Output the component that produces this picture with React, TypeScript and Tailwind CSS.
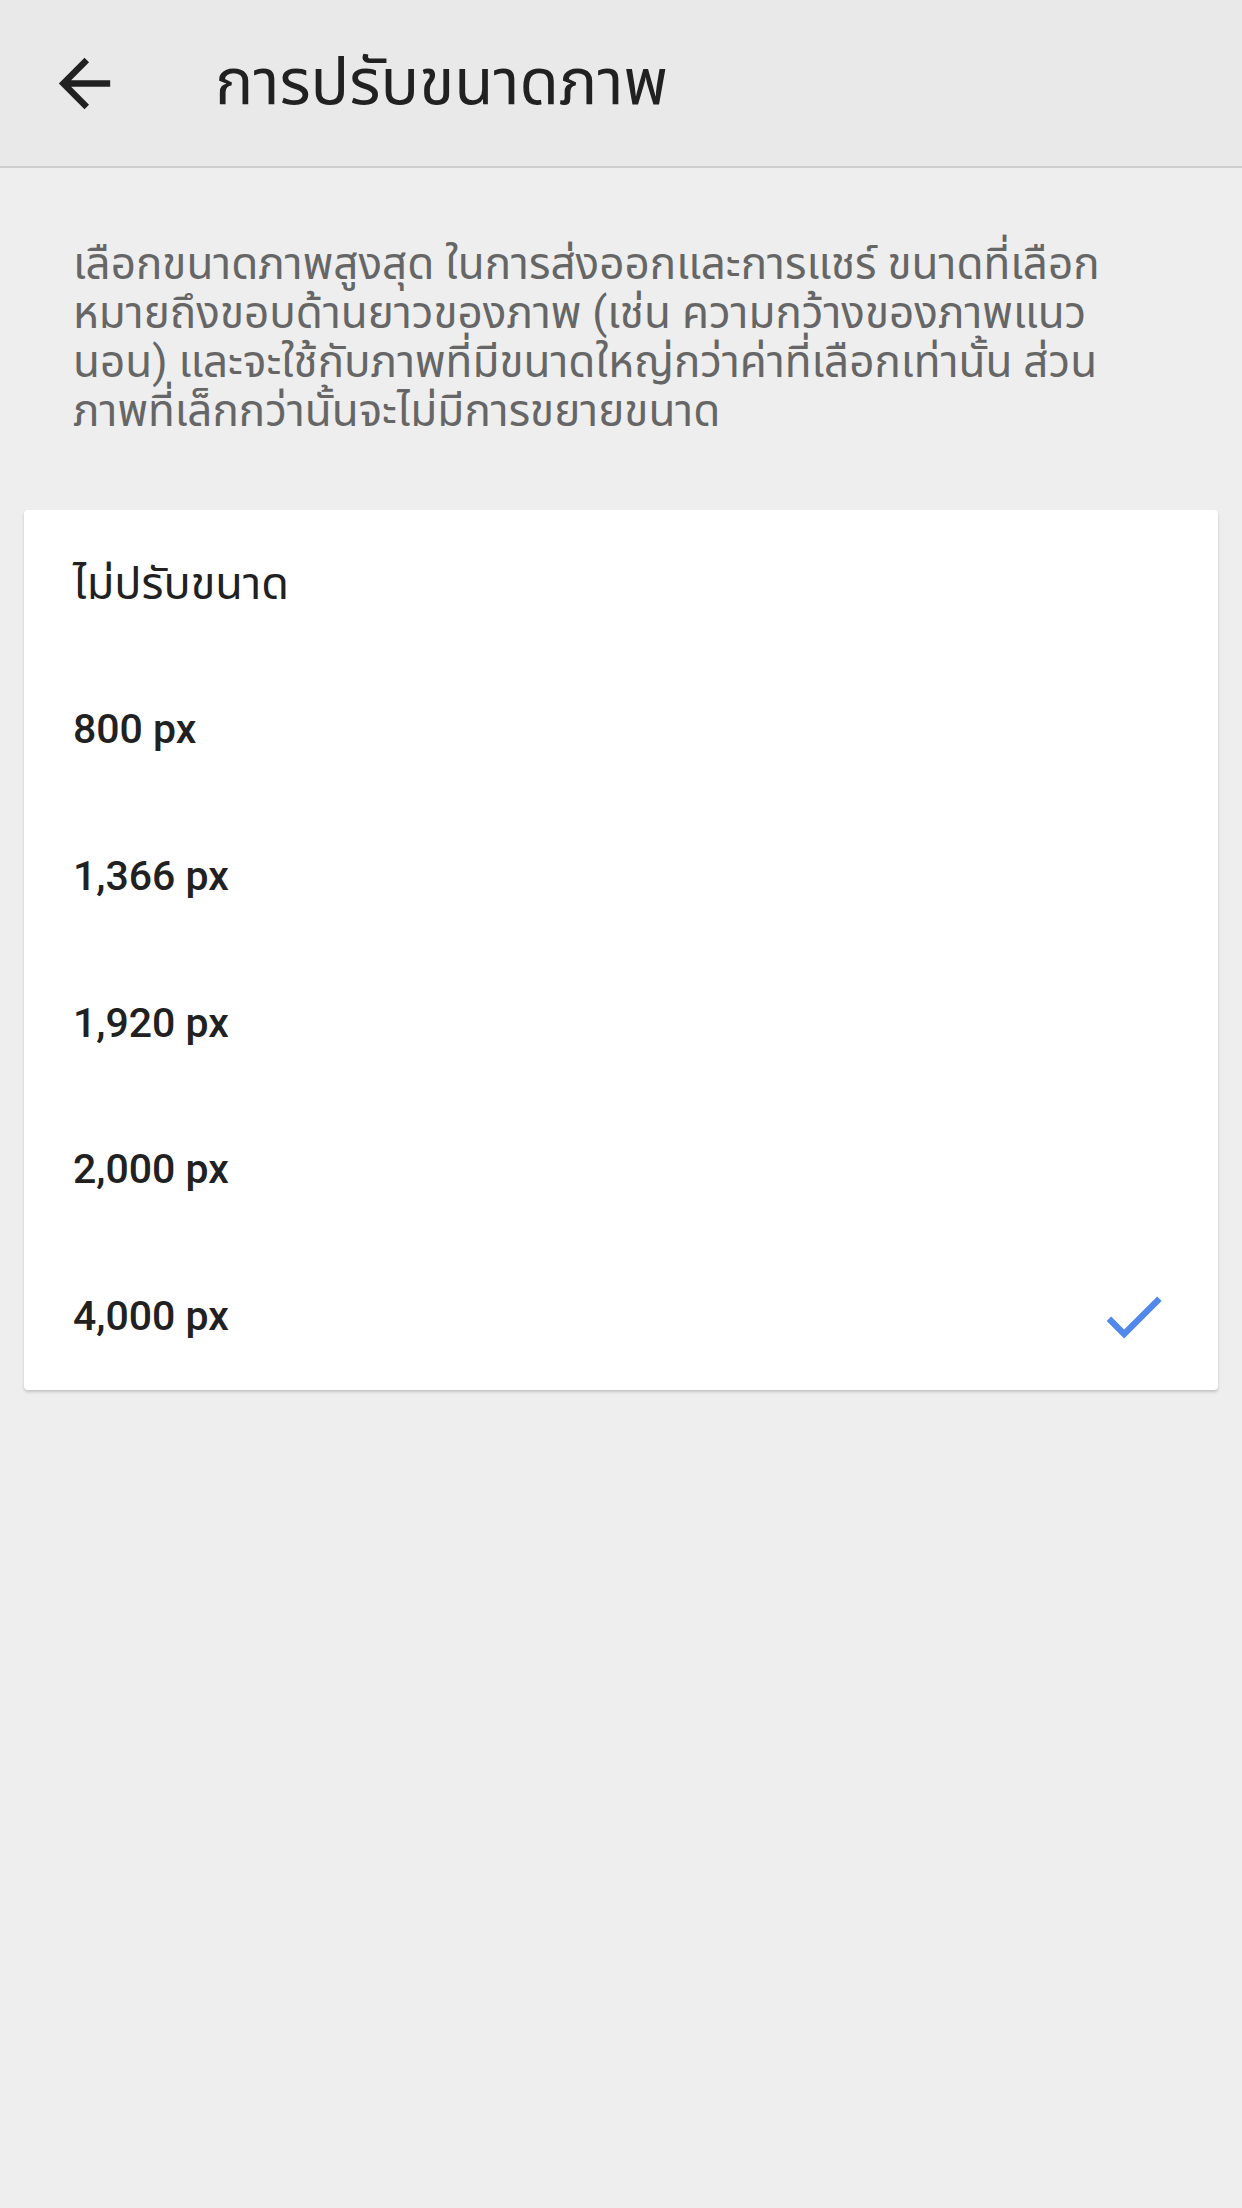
const options = ['ไม่ปรับขนาด', '800 px', '1,366 px', '1,920 px', '2,000 px', '4,000 px'];
const selected = '4,000 px';

const descLines = [
  'เลือกขนาดภาพสูงสุด ในการส่งออกและการแชร์ ขนาดที่เลือก',
  'หมายถึงขอบด้านยาวของภาพ (เช่น ความกว้างของภาพแนว',
  'นอน) และจะใช้กับภาพที่มีขนาดใหญ่กว่าค่าที่เลือกเท่านั้น ส่วน',
  'ภาพที่เล็กกว่านั้นจะไม่มีการขยายขนาด',
];

function BackArrow() {
  return (
    <svg viewBox="0 0 24 24" className="h-[77px] w-[77px] fill-[#212121]">
      <path d="M20 11H7.83l5.59-5.59L12 4l-8 8 8 8 1.41-1.41L7.83 13H20v-2z" />
    </svg>
  );
}

function CheckMark() {
  return (
    <svg viewBox="0 0 24 24" className="h-[75px] w-[75px] fill-[#5288ec]">
      <path d="M9 16.17L4.83 12l-1.42 1.41L9 19 21 7l-1.41-1.41z" />
    </svg>
  );
}

export default function App() {
  return (
    <div
      className="min-h-[2208px] w-[1242px] bg-[#eeeeee]"
      style={{ fontFamily: "Roboto, 'Noto Sans Thai', 'Noto Sans', sans-serif" }}
    >
      <header className="flex h-[168px] items-center border-b-2 border-[#cdcdcd] bg-[#e9e9e9]">
        <div className="ml-[46px] flex">
          <BackArrow />
        </div>
        <h1 className="ml-[92px] text-[64px] font-normal text-[#212121]">การปรับขนาดภาพ</h1>
      </header>

      <div className="px-[73px] pt-[72px] text-[44px] leading-[49px] text-[#666666]">
        {descLines.map((line) => (
          <div key={line} className="whitespace-nowrap">
            {line}
          </div>
        ))}
      </div>

      <div className="mx-[24px] mt-[74px] rounded-[4px] bg-white shadow-[0_2px_3px_rgba(0,0,0,0.18)]">
        {options.map((opt, i) => (
          <div key={opt} className="flex h-[146.7px] items-center justify-between pl-[49px] pr-[47px]">
            <span
              className={
                i === 0
                  ? 'text-[45px] font-normal text-[#212121]'
                  : 'text-[41px] font-medium text-[#212121]'
              }
            >
              {opt}
            </span>
            {opt === selected && <CheckMark />}
          </div>
        ))}
      </div>
    </div>
  );
}
